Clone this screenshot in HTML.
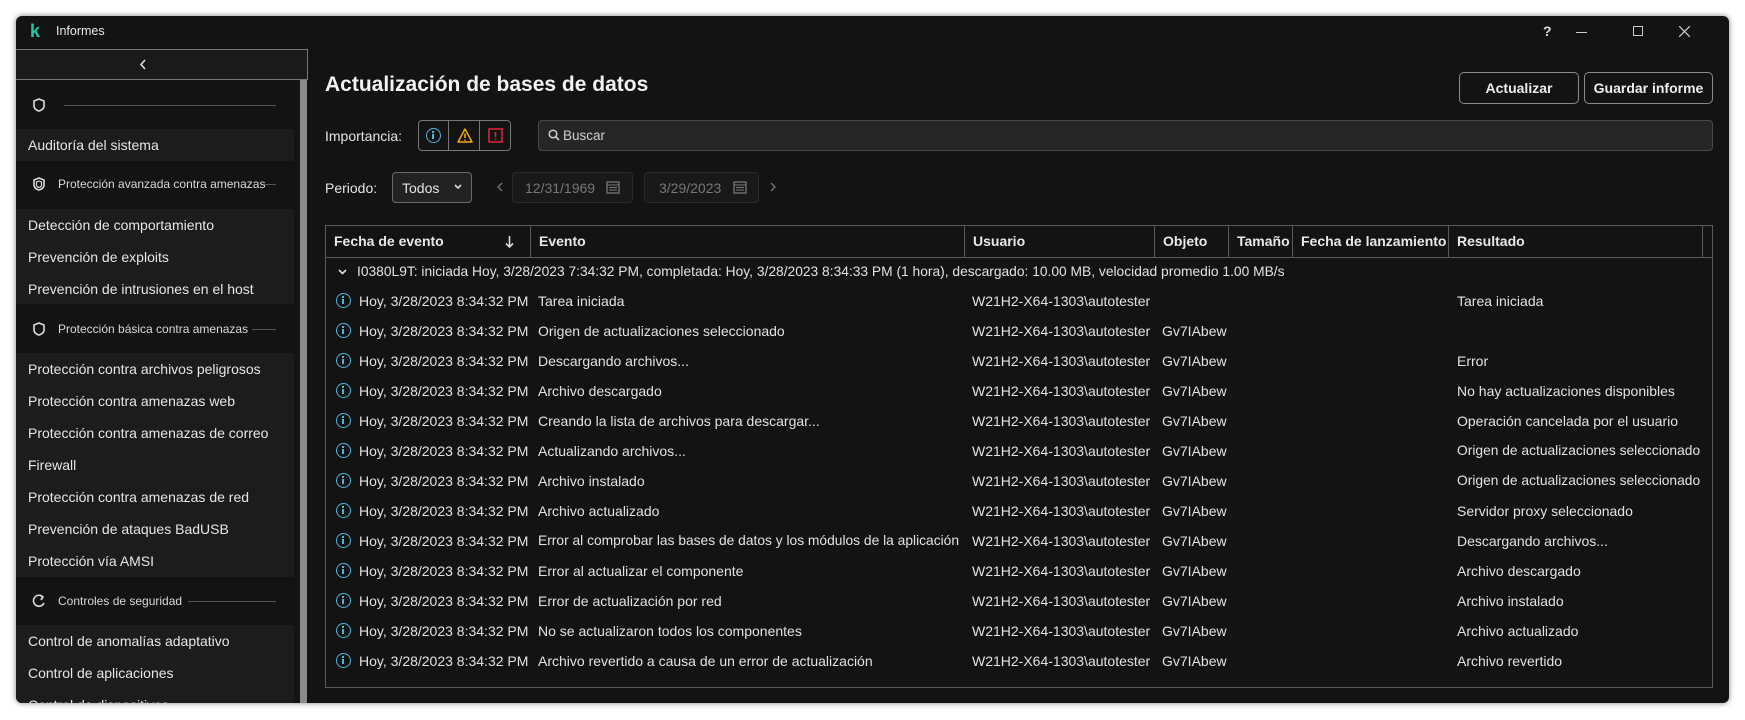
<!DOCTYPE html>
<html><head><meta charset="utf-8"><style>
*{margin:0;padding:0;box-sizing:border-box}
body{width:1745px;height:720px;background:#fff;font-family:"Liberation Sans",sans-serif;color:#e4e4e4;position:relative;overflow:hidden}
.win{position:absolute;left:16px;top:16px;width:1713px;height:687px;background:#131313;border-radius:6px;overflow:hidden;box-shadow:0 0 6px rgba(0,0,0,.5)}
.a{position:absolute;white-space:nowrap}
.sb{position:absolute;left:0;top:33px;width:292px;height:654px}
.it{position:absolute;left:0;width:278px;background:#1c1c1c}
.t{font-size:14px;color:#e6e6e6}
.hd{font-size:12px;color:#d8d8d8}
.line{position:absolute;height:1px;background:#555}
.btn{position:absolute;border:1px solid #8a8a8a;border-radius:5px;font-size:14px;font-weight:bold;color:#eee;text-align:center;line-height:30px}
.th{position:absolute;top:0;height:31px;line-height:31px;font-size:14px;font-weight:bold;color:#e8e8e8;padding-left:8px}
.row{position:absolute;left:0;width:1388px;height:30px;font-size:14px;color:#e2e2e2}
.row span{position:absolute;top:7px;white-space:nowrap}
.ic{position:absolute;left:11px;top:7px;width:15px;height:15px;border:1.6px solid #4db6e0;border-radius:50%}
.ic:before{content:"";position:absolute;left:5px;top:2px;width:2px;height:2px;background:#4db6e0}
.ic:after{content:"";position:absolute;left:5px;top:5px;width:2px;height:5px;background:#4db6e0}
</style></head><body>
<div class="win">
 <div class="a" style="left:14px;top:5px;font-size:18px;font-weight:bold;color:#1fc7a3">k</div>
 <div class="a" style="left:40px;top:8px;font-size:12.5px;color:#e8e8e8">Informes</div>
 <div class="a" style="left:1527px;top:7px;font-size:14px;font-weight:bold;color:#ddd">?</div>
 <div class="a" style="left:1560px;top:16px;width:11px;height:1px;background:#ccc"></div>
 <div class="a" style="left:1617px;top:10px;width:10px;height:10px;border:1px solid #ccc"></div>
 <svg class="a" style="left:1663px;top:10px" width="11" height="11"><path d="M0 0L11 11M11 0L0 11" stroke="#ccc" stroke-width="1.2"/></svg>

 <div class="sb">
  <div class="a" style="left:0;top:0;width:292px;height:31px;border:1px solid #777;border-left:none;background:#1a1a1a"></div>
  <svg class="a" style="left:123px;top:10px" width="8" height="11"><path d="M6 1L2 5.5L6 10" stroke="#ddd" stroke-width="1.6" fill="none"/></svg>
  <div class="a" style="left:284px;top:31px;width:7px;height:623px;background:#8a8a8a"></div>
  <svg class="a" style="left:17px;top:49px" width="12" height="14"><path d="M6 1L11 3V8C11 10.5 8.5 12.5 6 13C3.5 12.5 1 10.5 1 8V3Z" stroke="#ddd" stroke-width="1.6" fill="none"/></svg>
  <div class="line" style="left:48px;top:56px;width:212px"></div>
  <div class="it" style="top:80px;height:32px"></div>
  <div class="a t" style="left:12px;top:88px">Auditoría del sistema</div>
  <svg class="a" style="left:17px;top:128px" width="12" height="14"><path d="M6 1L11 3V8C11 10.5 8.5 12.5 6 13C3.5 12.5 1 10.5 1 8V3Z" stroke="#ddd" stroke-width="1.6" fill="none"/><path d="M6 4L8.5 5V8C8.5 9.2 7.3 10.2 6 10.5C4.7 10.2 3.5 9.2 3.5 8V5Z" stroke="#ddd" stroke-width="1.2" fill="none"/></svg>
  <div class="a hd" style="left:42px;top:128px">Protección avanzada contra amenazas</div>
  <div class="line" style="left:248px;top:135px;width:12px"></div>
  <div class="it" style="top:160px;height:95px"></div>
  <div class="a t" style="left:12px;top:168px">Detección de comportamiento</div>
  <div class="a t" style="left:12px;top:200px">Prevención de exploits</div>
  <div class="a t" style="left:12px;top:232px">Prevención de intrusiones en el host</div>
  <svg class="a" style="left:17px;top:273px" width="12" height="14"><path d="M6 1L11 3V8C11 10.5 8.5 12.5 6 13C3.5 12.5 1 10.5 1 8V3Z" stroke="#ddd" stroke-width="1.6" fill="none"/></svg>
  <div class="a hd" style="left:42px;top:273px">Protección básica contra amenazas</div>
  <div class="line" style="left:236px;top:280px;width:24px"></div>
  <div class="it" style="top:304px;height:224px"></div>
  <div class="a t" style="left:12px;top:312px">Protección contra archivos peligrosos</div>
  <div class="a t" style="left:12px;top:344px">Protección contra amenazas web</div>
  <div class="a t" style="left:12px;top:376px">Protección contra amenazas de correo</div>
  <div class="a t" style="left:12px;top:408px">Firewall</div>
  <div class="a t" style="left:12px;top:440px">Protección contra amenazas de red</div>
  <div class="a t" style="left:12px;top:472px">Prevención de ataques BadUSB</div>
  <div class="a t" style="left:12px;top:504px">Protección vía AMSI</div>
  <svg class="a" style="left:16px;top:545px" width="14" height="14"><path d="M11 3A5.5 5.5 0 1 0 12 9M8 1L11 3L9 6" stroke="#ddd" stroke-width="1.6" fill="none"/></svg>
  <div class="a hd" style="left:42px;top:545px">Controles de seguridad</div>
  <div class="line" style="left:172px;top:552px;width:88px"></div>
  <div class="it" style="top:576px;height:80px"></div>
  <div class="a t" style="left:12px;top:584px">Control de anomalías adaptativo</div>
  <div class="a t" style="left:12px;top:616px">Control de aplicaciones</div>
  <div class="a t" style="left:12px;top:648px">Control de dispositivos</div>
 </div>

 <div class="a" style="left:309px;top:57px;font-size:21px;font-weight:bold;color:#f2f2f2">Actualización de bases de datos</div>
 <div class="btn" style="left:1443px;top:56px;width:120px;height:32px">Actualizar</div>
 <div class="btn" style="left:1568px;top:56px;width:129px;height:32px">Guardar informe</div>

 <div class="a" style="left:309px;top:112px;font-size:14px">Importancia:</div>
 <div class="a" style="left:402px;top:104px;width:31px;height:31px;border:1px solid #777;border-radius:4px 0 0 4px"></div>
 <div class="a" style="left:433px;top:104px;width:31px;height:31px;border:1px solid #777;border-left:none"></div>
 <div class="a" style="left:464px;top:104px;width:31px;height:31px;border:1px solid #777;border-left:none;border-radius:0 4px 4px 0"></div>
 <div class="ic" style="left:410px;top:112px"></div>
 <svg class="a" style="left:441px;top:112px" width="16" height="15"><path d="M8 1L15 14H1Z" stroke="#f0a80a" stroke-width="1.5" fill="none" stroke-linejoin="round"/><path d="M8 5.5V10M8 11.5V12.8" stroke="#f0a80a" stroke-width="1.6"/></svg>
 <svg class="a" style="left:472px;top:112px" width="15" height="15"><rect x="1" y="1" width="13" height="13" stroke="#e3263a" stroke-width="1.5" fill="none"/><path d="M7.5 4V9M7.5 10.5V11.8" stroke="#e3263a" stroke-width="1.6"/></svg>
 <div class="a" style="left:522px;top:104px;width:1175px;height:31px;background:#262626;border:1px solid #4a4a4a;border-radius:4px"></div>
 <svg class="a" style="left:532px;top:113px" width="12" height="12"><circle cx="5" cy="5" r="3.8" stroke="#ccc" stroke-width="1.5" fill="none"/><path d="M7.8 7.8L11 11" stroke="#ccc" stroke-width="1.7"/></svg>
 <div class="a" style="left:547px;top:112px;font-size:13.5px;color:#cfcfcf">Buscar</div>

 <div class="a" style="left:309px;top:164px;font-size:14px">Periodo:</div>
 <div class="a" style="left:376px;top:156px;width:80px;height:31px;border:1px solid #6a6a6a;border-radius:4px;background:#222"></div>
 <div class="a" style="left:386px;top:164px;font-size:14px">Todos</div>
 <svg class="a" style="left:438px;top:168px" width="8" height="6"><path d="M1 1L4 4L7 1" stroke="#ddd" stroke-width="1.6" fill="none"/></svg>
 <svg class="a" style="left:481px;top:166px" width="6" height="10"><path d="M5 1L1 5L5 9" stroke="#777" stroke-width="1.3" fill="none"/></svg>
 <div class="a" style="left:496px;top:156px;width:121px;height:31px;border:1px solid #2a2a2a;border-radius:4px;background:#191919"></div>
 <div class="a" style="left:509px;top:164px;font-size:14px;color:#777">12/31/1969</div>
 <svg class="a" style="left:590px;top:164px" width="14" height="14"><rect x="1" y="2" width="12" height="11" fill="none" stroke="#777" stroke-width="1.3"/><path d="M1 5H13M3 7.5H11M3 10H11" stroke="#777"/></svg>
 <div class="a" style="left:628px;top:156px;width:115px;height:31px;border:1px solid #2a2a2a;border-radius:4px;background:#191919"></div>
 <div class="a" style="left:643px;top:164px;font-size:14px;color:#777">3/29/2023</div>
 <svg class="a" style="left:717px;top:164px" width="14" height="14"><rect x="1" y="2" width="12" height="11" fill="none" stroke="#777" stroke-width="1.3"/><path d="M1 5H13M3 7.5H11M3 10H11" stroke="#777"/></svg>
 <svg class="a" style="left:754px;top:166px" width="6" height="10"><path d="M1 1L5 5L1 9" stroke="#777" stroke-width="1.3" fill="none"/></svg>

 <div class="a" style="left:309px;top:209px;width:1388px;height:463px;border:1px solid #5a5a5a">
  <div class="a" style="left:0;top:31px;width:1386px;height:1px;background:#5a5a5a"></div>
  <div class="a" style="left:204px;top:0;width:1px;height:31px;background:#5a5a5a"></div>
  <div class="a" style="left:638px;top:0;width:1px;height:31px;background:#5a5a5a"></div>
  <div class="a" style="left:828px;top:0;width:1px;height:31px;background:#5a5a5a"></div>
  <div class="a" style="left:902px;top:0;width:1px;height:31px;background:#5a5a5a"></div>
  <div class="a" style="left:966px;top:0;width:1px;height:31px;background:#5a5a5a"></div>
  <div class="a" style="left:1122px;top:0;width:1px;height:31px;background:#5a5a5a"></div>
  <div class="a" style="left:1376px;top:0;width:1px;height:31px;background:#5a5a5a"></div>
  <div class="th" style="left:0">Fecha de evento</div>
  <svg class="a" style="left:179px;top:9px" width="9" height="14"><path d="M4.5 1V12M1 8.5L4.5 12L8 8.5" stroke="#ddd" stroke-width="1.6" fill="none"/></svg>
  <div class="th" style="left:205px">Evento</div>
  <div class="th" style="left:639px">Usuario</div>
  <div class="th" style="left:829px">Objeto</div>
  <div class="th" style="left:903px">Tamaño</div>
  <div class="th" style="left:967px">Fecha de lanzamiento</div>
  <div class="th" style="left:1123px">Resultado</div>
  <svg class="a" style="left:12px;top:43px" width="9" height="6"><path d="M1 1L4.5 4.5L8 1" stroke="#ddd" stroke-width="1.6" fill="none"/></svg>
  <div class="a" style="left:31px;top:38px;font-size:13.8px;color:#e2e2e2">I0380L9T: iniciada Hoy, 3/28/2023 7:34:32 PM, completada: Hoy, 3/28/2023 8:34:33 PM (1 hora), descargado: 10.00 MB, velocidad promedio 1.00 MB/s</div>
 </div>
 <div class="a" style="left:309px;top:270px;width:1388px;height:400px;overflow:hidden">
  <div class="row" style="top:0"><i class="ic"></i><span style="left:34px">Hoy, 3/28/2023 8:34:32 PM</span><span style="left:213px">Tarea iniciada</span><span style="left:647px">W21H2-X64-1303\autotester</span><span style="left:1132px">Tarea iniciada</span></div>
  <div class="row" style="top:30px"><i class="ic"></i><span style="left:34px">Hoy, 3/28/2023 8:34:32 PM</span><span style="left:213px">Origen de actualizaciones seleccionado</span><span style="left:647px">W21H2-X64-1303\autotester</span><span style="left:837px">Gv7IAbew</span></div>
  <div class="row" style="top:60px"><i class="ic"></i><span style="left:34px">Hoy, 3/28/2023 8:34:32 PM</span><span style="left:213px">Descargando archivos...</span><span style="left:647px">W21H2-X64-1303\autotester</span><span style="left:837px">Gv7IAbew</span><span style="left:1132px">Error</span></div>
  <div class="row" style="top:90px"><i class="ic"></i><span style="left:34px">Hoy, 3/28/2023 8:34:32 PM</span><span style="left:213px">Archivo descargado</span><span style="left:647px">W21H2-X64-1303\autotester</span><span style="left:837px">Gv7IAbew</span><span style="left:1132px">No hay actualizaciones disponibles</span></div>
  <div class="row" style="top:120px"><i class="ic"></i><span style="left:34px">Hoy, 3/28/2023 8:34:32 PM</span><span style="left:213px">Creando la lista de archivos para descargar...</span><span style="left:647px">W21H2-X64-1303\autotester</span><span style="left:837px">Gv7IAbew</span><span style="left:1132px">Operación cancelada por el usuario</span></div>
  <div class="row" style="top:150px"><i class="ic"></i><span style="left:34px">Hoy, 3/28/2023 8:34:32 PM</span><span style="left:213px">Actualizando archivos...</span><span style="left:647px">W21H2-X64-1303\autotester</span><span style="left:837px">Gv7IAbew</span><span style="left:1132px;font-size:13.8px">Origen de actualizaciones seleccionado</span></div>
  <div class="row" style="top:180px"><i class="ic"></i><span style="left:34px">Hoy, 3/28/2023 8:34:32 PM</span><span style="left:213px">Archivo instalado</span><span style="left:647px">W21H2-X64-1303\autotester</span><span style="left:837px">Gv7IAbew</span><span style="left:1132px;font-size:13.8px">Origen de actualizaciones seleccionado</span></div>
  <div class="row" style="top:210px"><i class="ic"></i><span style="left:34px">Hoy, 3/28/2023 8:34:32 PM</span><span style="left:213px">Archivo actualizado</span><span style="left:647px">W21H2-X64-1303\autotester</span><span style="left:837px">Gv7IAbew</span><span style="left:1132px">Servidor proxy seleccionado</span></div>
  <div class="row" style="top:240px"><i class="ic"></i><span style="left:34px">Hoy, 3/28/2023 8:34:32 PM</span><span style="left:213px;font-size:13.8px">Error al comprobar las bases de datos y los módulos de la aplicación</span><span style="left:647px">W21H2-X64-1303\autotester</span><span style="left:837px">Gv7IAbew</span><span style="left:1132px">Descargando archivos...</span></div>
  <div class="row" style="top:270px"><i class="ic"></i><span style="left:34px">Hoy, 3/28/2023 8:34:32 PM</span><span style="left:213px">Error al actualizar el componente</span><span style="left:647px">W21H2-X64-1303\autotester</span><span style="left:837px">Gv7IAbew</span><span style="left:1132px">Archivo descargado</span></div>
  <div class="row" style="top:300px"><i class="ic"></i><span style="left:34px">Hoy, 3/28/2023 8:34:32 PM</span><span style="left:213px">Error de actualización por red</span><span style="left:647px">W21H2-X64-1303\autotester</span><span style="left:837px">Gv7IAbew</span><span style="left:1132px">Archivo instalado</span></div>
  <div class="row" style="top:330px"><i class="ic"></i><span style="left:34px">Hoy, 3/28/2023 8:34:32 PM</span><span style="left:213px">No se actualizaron todos los componentes</span><span style="left:647px">W21H2-X64-1303\autotester</span><span style="left:837px">Gv7IAbew</span><span style="left:1132px">Archivo actualizado</span></div>
  <div class="row" style="top:360px"><i class="ic"></i><span style="left:34px">Hoy, 3/28/2023 8:34:32 PM</span><span style="left:213px">Archivo revertido a causa de un error de actualización</span><span style="left:647px">W21H2-X64-1303\autotester</span><span style="left:837px">Gv7IAbew</span><span style="left:1132px">Archivo revertido</span></div>
 </div>
</div>
</body></html>
